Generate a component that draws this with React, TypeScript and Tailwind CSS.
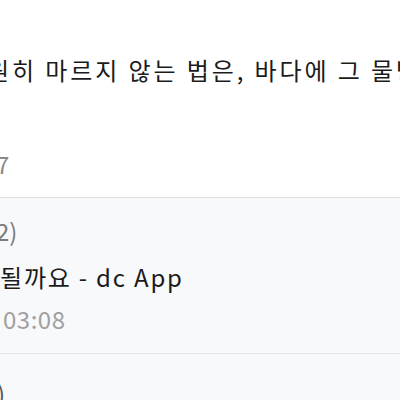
import React from "react";

const font = "font-['Noto_Sans_CJK_KR','Noto_Sans',sans-serif]";

const App = () => {
  return (
    <div className={`h-[400px] w-[400px] overflow-hidden bg-[#f8f9fb] ${font}`}>
      <div className="overflow-hidden border-b border-[#dfe1e6] bg-white pb-[18px] pt-[53px]">
        <p className="-ml-[13px] whitespace-nowrap text-[24px] leading-[34px] tracking-[2.9px] text-[#1b1b1b]">
          원히 마르지 않는 법은, 바다에 그 물방울을 던지는 것
        </p>
        <p className="-ml-[4px] mt-[62px] text-[24px] leading-[30px] text-[#8a8a8a]">7</p>
      </div>
      <div className="overflow-hidden border-b border-[#e3e5ea] pb-[19px] pt-[18px]">
        <p className="-ml-[4px] text-[24px] leading-[30px] text-[#7c7c7c]">2)</p>
        <p className="mt-[14px] whitespace-nowrap text-[24px] leading-[34px] tracking-[1.8px] text-[#1b1b1b]">
          될까요 - dc App
        </p>
        <p className="ml-[3px] mt-[10px] text-[24px] leading-[30px] tracking-[0.5px] text-[#a0a0a0]">03:08</p>
      </div>
      <div className="overflow-hidden pt-[24px]">
        <p className="-ml-[3px] text-[24px] leading-[30px] text-[#555]">)</p>
      </div>
    </div>
  );
};

export default App;
